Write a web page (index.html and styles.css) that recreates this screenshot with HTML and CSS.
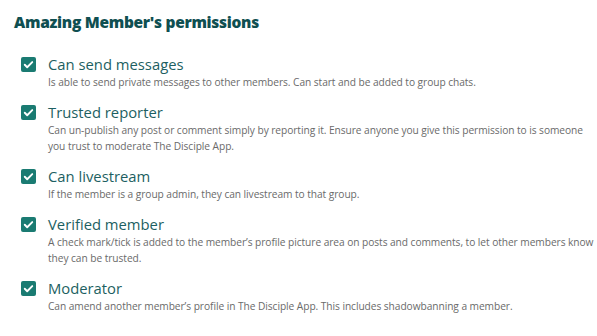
FILE: index.html
```html
<!DOCTYPE html>
<html>
<head>
    <title>Member permissions</title>
    <link rel="stylesheet" href="styles.css">
</head>
<body>
    <div class="panel">
        <h2>Amazing Member's permissions</h2>
        <ul class="permissions">
            <li class="permission">
                <span class="check"><svg viewBox="0 0 16 16"><path d="M4 8.3l2.6 2.6L12 5.4" /></svg></span>
                <div class="permission-text">
                    <div class="permission-name">Can send messages</div>
                    <div class="permission-desc">Is able to send private messages to other members. Can start and be added to group chats.</div>
                </div>
            </li>
            <li class="permission">
                <span class="check"><svg viewBox="0 0 16 16"><path d="M4 8.3l2.6 2.6L12 5.4" /></svg></span>
                <div class="permission-text">
                    <div class="permission-name">Trusted reporter</div>
                    <div class="permission-desc">Can un-publish any post or comment simply by reporting it. Ensure anyone you give this permission to is someone you trust to moderate The Disciple App.</div>
                </div>
            </li>
            <li class="permission">
                <span class="check"><svg viewBox="0 0 16 16"><path d="M4 8.3l2.6 2.6L12 5.4" /></svg></span>
                <div class="permission-text">
                    <div class="permission-name">Can livestream</div>
                    <div class="permission-desc">If the member is a group admin, they can livestream to that group.</div>
                </div>
            </li>
            <li class="permission">
                <span class="check"><svg viewBox="0 0 16 16"><path d="M4 8.3l2.6 2.6L12 5.4" /></svg></span>
                <div class="permission-text">
                    <div class="permission-name">Verified member</div>
                    <div class="permission-desc">A check mark/tick is added to the member’s profile picture area on posts and comments, to let other members know they can be trusted.</div>
                </div>
            </li>
            <li class="permission">
                <span class="check"><svg viewBox="0 0 16 16"><path d="M4 8.3l2.6 2.6L12 5.4" /></svg></span>
                <div class="permission-text">
                    <div class="permission-name">Moderator</div>
                    <div class="permission-desc">Can amend another member’s profile in The Disciple App. This includes shadowbanning a member.</div>
                </div>
            </li>
        </ul>
    </div>
</body>
</html>
```

FILE: styles.css
```css
body {
    margin: 0;
    background-color: #fff;
    font-family: "Open Sans", Lato, sans-serif;
}
.panel {
    padding: 10px 0 10px 14px;
}
h2 {
    margin: 0 0 20px 0;
    font-size: 15.5px;
    font-weight: 800;
    letter-spacing: -0.3px;
    color: #0f4f51;
    line-height: 24px;
}
.permissions {
    list-style: none;
    margin: 0;
    padding: 0 0 0 7px;
}
.permission {
    display: flex;
    gap: 12px;
    margin-bottom: 12px;
}
.check {
    flex: none;
    width: 15px;
    height: 15px;
    margin-top: 3px;
    border-radius: 2px;
    background-color: #1a7b72;
}
.check svg {
    display: block;
    width: 15px;
    height: 15px;
    fill: none;
    stroke: #fff;
    stroke-width: 2;
    stroke-linecap: round;
    stroke-linejoin: round;
}
.permission-name {
    font-size: 14.8px;
    line-height: 20px;
    color: #1d5f62;
}
.permission-desc {
    font-size: 10.2px;
    letter-spacing: -0.06px;
    line-height: 16px;
    color: #6a6a6a;
    max-width: 555px;
}
```
